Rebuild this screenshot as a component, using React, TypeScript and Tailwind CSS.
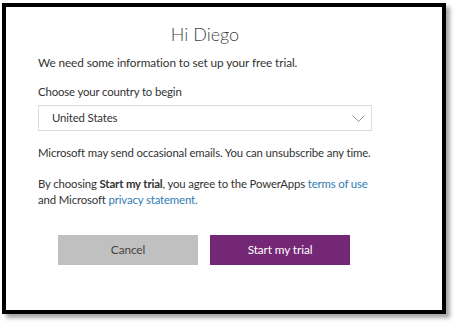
export default function App() {
  return (
    <div className="h-[322px] w-[455px] overflow-hidden bg-white pl-[2px] pt-[3px] font-['Lato',sans-serif] text-[#333]">
      <div className="flex h-[311px] w-[444px] flex-col border-4 border-black bg-white pl-[32px] shadow-[4px_4px_4px_rgba(0,0,0,0.35)]">
        {/* Heading */}
        <h1 className="mt-[13px] w-[334px] text-center text-[18px] font-light leading-[28px] text-[#444]">Hi Diego</h1>

        <p className="mt-[7px] text-[11.8px] leading-[16px] tracking-[-0.1px]">We need some information to set up your free trial.</p>

        <p className="mt-[13px] text-[11.4px] leading-[16px] tracking-[-0.15px]">Choose your country to begin</p>

        {/* Country select */}
        <div className="mt-[5px] flex h-[26px] w-[334px] items-center justify-between border border-[#dcdcdc] pl-[13px] pr-[6px] text-[11.4px] tracking-[-0.15px]">
          <span>United States</span>
          <svg width="13" height="7" viewBox="0 0 13 7" fill="none" stroke="#888" strokeWidth="0.9">
            <polyline points="0.5,0.5 6.5,6.5 12.5,0.5" />
          </svg>
        </div>

        <p className="mt-[14px] text-[11.4px] leading-[16px] tracking-[-0.15px]">
          Microsoft may send occasional emails. You can unsubscribe any time.
        </p>

        <p className="mt-[15px] text-[11.4px] leading-[16px] tracking-[-0.15px]">
          By choosing <span className="font-bold">Start my trial</span>, you agree to the PowerApps{' '}
          <span className="text-[#2f7cb6]">terms of use</span>
          <br />
          and Microsoft <span className="text-[#2f7cb6]">privacy statement.</span>
        </p>

        {/* Actions */}
        <div className="mt-[27px] flex gap-[12px] pl-[20px]">
          <button className="h-[30px] w-[140px] bg-[#c0c0c0] text-[11.8px] tracking-[-0.1px] text-[#444]">Cancel</button>
          <button className="h-[30px] w-[140px] bg-[#742774] text-[11.8px] tracking-[-0.1px] text-white">Start my trial</button>
        </div>
      </div>
    </div>
  );
}
